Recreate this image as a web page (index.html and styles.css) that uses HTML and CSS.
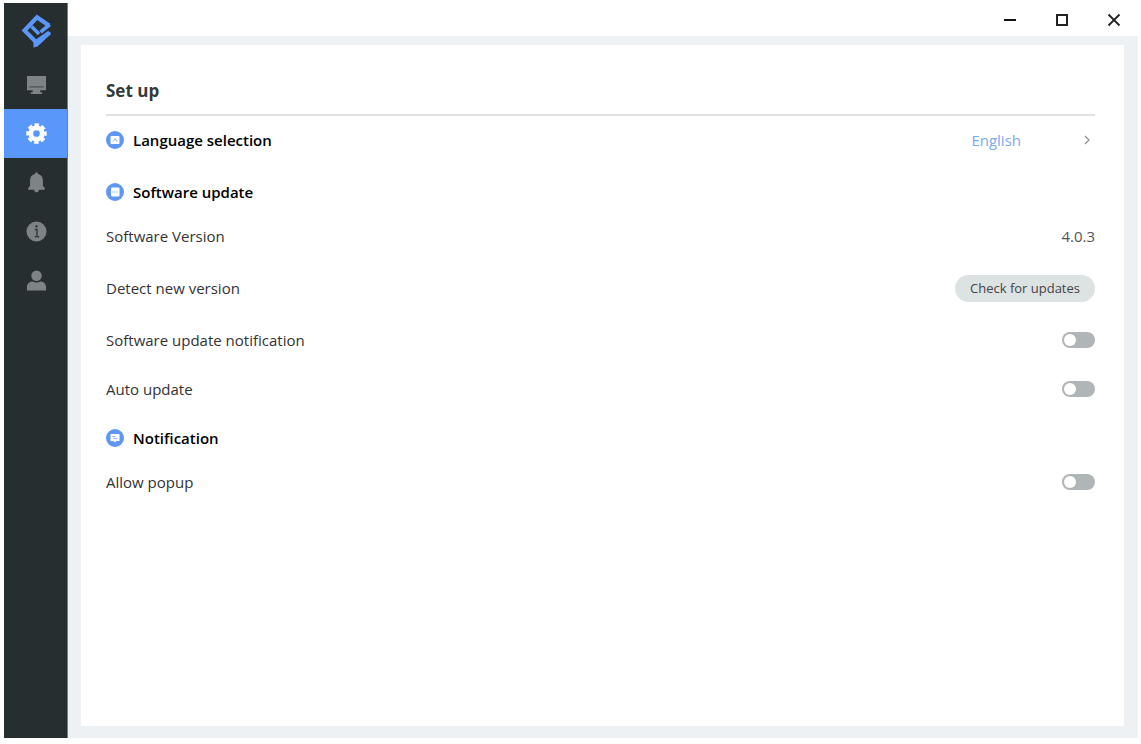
FILE: index.html
```html
<!DOCTYPE html>
<html lang="en">
<head>
<meta charset="UTF-8">
<meta name="viewport" content="width=device-width, initial-scale=1.0">
<title>Set up</title>
<link rel="stylesheet" href="styles.css">
</head>
<body>
<div class="window">
  <nav class="sidebar">
    <svg class="logo" viewBox="0 0 32 34" aria-hidden="true">
      <path d="M29 11.500L17 3.200L4.500 16.500L16 28L29.500 18.500" fill="none" stroke="#5a97f8" stroke-width="4.200" stroke-linejoin="miter"/>
      <path d="M13.500 25.500L13.500 33.500L17.500 32.500L30.500 20.500V17.500L16 27z" fill="#5a97f8"/>
      <path d="M11.500 12.500l7.500 7.500M29.800 10.500L20.500 18.200" fill="none" stroke="#5a97f8" stroke-width="3.600"/>
    </svg>
    <button class="nav" aria-label="Devices">
      <svg viewBox="0 0 22 22"><path d="M1 2h20v15h-6v2h2v2H5v-2h2v-2H1z" fill="#7e8485"/><path d="M3.500 13.500h15" stroke="#4a5152" stroke-width="1.300"/></svg>
    </button>
    <button class="nav active" aria-label="Settings">
      <svg viewBox="0 0 22 22"><g fill="none" stroke="#fff"><circle cx="11" cy="11" r="6" stroke-width="5"/><circle cx="11" cy="11" r="9" stroke-width="3.500" stroke-dasharray="4.600 2.470" stroke-dashoffset="2.300"/></g></svg>
    </button>
    <button class="nav" aria-label="Notifications">
      <svg viewBox="0 0 22 22"><path d="M11 0.500c1 0 1.700 0.700 1.700 1.700 3.500 0.900 5 3.400 5 6.800v5.500l2 2.500v1.500H2.300V17l2-2.500V9c0-3.400 1.500-5.900 5-6.800 0-1 0.700-1.700 1.700-1.700zM8.500 18.500h5c-0.300 1.800-1.200 2.700-2.500 2.700s-2.200-0.900-2.500-2.700z" fill="#7e8485"/></svg>
    </button>
    <button class="nav" aria-label="About">
      <svg viewBox="0 0 22 22"><circle cx="11" cy="11" r="10.500" fill="#7e8485"/><path d="M9.200 8.800h2.300v7.200M9.200 16.500h4.600" stroke="#353c3d" stroke-width="1.600" fill="none"/><circle cx="11" cy="5.600" r="1.300" fill="#353c3d"/></svg>
    </button>
    <button class="nav" aria-label="Account">
      <svg viewBox="0 0 22 22"><circle cx="11" cy="6" r="5.500" fill="#7e8485"/><path d="M1 21.500v-3.500c0-3.600 2.400-6 6-6 2.400 1.400 5.600 1.400 8 0 3.600 0 6 2.400 6 6v3.500z" fill="#7e8485"/></svg>
    </button>
  </nav>
  <div class="main">
    <header class="titlebar">
      <button aria-label="Minimize"><svg viewBox="0 0 14 14"><path d="M1 7h12" stroke="#111" stroke-width="2"/></svg></button>
      <button aria-label="Maximize"><svg viewBox="0 0 14 14"><path d="M2 2h10v10H2z" fill="none" stroke="#222" stroke-width="2"/></svg></button>
      <button aria-label="Close"><svg viewBox="0 0 14 14"><path d="M1.500 1.500l11 11M12.500 1.500l-11 11" stroke="#222" stroke-width="1.800"/></svg></button>
    </header>
    <main class="content">
      <section class="card">
        <h1>Set up</h1>
        <div class="row section">
          <h2>
            <svg viewBox="0 0 18 18"><circle cx="9" cy="9" r="9" fill="#5e97f3"/><rect x="4.500" y="5" width="9" height="8" rx="1" fill="#fff"/><path d="M7 10.500l2-3 2 3" fill="none" stroke="#8db5f7"/></svg>
            Language selection
          </h2>
          <button class="language">English
            <svg viewBox="0 0 8 10"><path d="M2 1l4 4-4 4" fill="none" stroke="#8a8f91" stroke-width="1.200"/></svg>
          </button>
        </div>
        <div class="row">
          <h2>
            <svg viewBox="0 0 18 18"><circle cx="9" cy="9" r="9" fill="#5e97f3"/><rect x="5" y="4.500" width="8.500" height="9" rx="1" fill="#fff"/><path d="M6.500 9h2M9.500 9h2.500" stroke="#8db5f7"/></svg>
            Software update
          </h2>
        </div>
        <div class="row first">
          <span>Software Version</span>
          <span class="version">4.0.3</span>
        </div>
        <div class="row">
          <span>Detect new version</span>
          <button class="check">Check for updates</button>
        </div>
        <div class="row">
          <label for="notify">Software update notification</label>
          <input type="checkbox" class="switch" id="notify">
        </div>
        <div class="row tight">
          <label for="auto">Auto update</label>
          <input type="checkbox" class="switch" id="auto">
        </div>
        <div class="row tight">
          <h2>
            <svg viewBox="0 0 18 18"><circle cx="9" cy="9" r="9" fill="#5e97f3"/><path d="M4.500 5h9v7h-3L9 13.500 7.500 12h-3z" fill="#fff"/><path d="M6.500 7.500h3M7.500 9.500h4" stroke="#8db5f7"/></svg>
            Notification
          </h2>
        </div>
        <div class="row first">
          <label for="popup">Allow popup</label>
          <input type="checkbox" class="switch" id="popup">
        </div>
      </section>
    </main>
  </div>
</div>
</body>
</html>
```
FILE: styles.css
```css
* { box-sizing: border-box; }
body { margin: 0; background: #fff; color: #333; font: 15px/20px "Open Sans", "Noto Sans", sans-serif; }
button { padding: 0; border: 0; background: none; font: inherit; cursor: pointer; }
svg { display: block; flex: none; }
.window { display: flex; min-height: 100vh; padding: 3px 3px 6px 4px; }
.sidebar { display: flex; flex-direction: column; width: 64px; background: #272e2f; border-right: 1px solid #777d80; }
.logo { width: 32px; height: 34px; margin: 11px 16px 12px; }
.nav { display: flex; align-items: center; justify-content: center; height: 49px; padding-left: 2px; }
.nav svg { width: 21px; height: 21px; }
.nav.active { background: #5997fb; }
.main { flex: 1; display: flex; flex-direction: column; }
.titlebar { display: flex; align-items: center; justify-content: flex-end; gap: 38px; height: 33px; padding-right: 17px; }
.titlebar svg { width: 14px; height: 14px; }
.content { flex: 1; display: flex; padding: 9px 14px 12px 13px; background: #edf1f3; }
.card { flex: 1; padding: 32px 29px 32px 25px; background: #fff; }
h1 { margin: 0 0 6px; padding-bottom: 9px; border-bottom: 2px solid #e1e2e3; color: #333b3b; font-size: 17px; line-height: 28px; font-weight: 700; }
h2 { display: flex; align-items: center; gap: 9px; margin: 0; color: #000; font-size: 15px; line-height: 20px; font-weight: 600; }
h2 svg { width: 18px; height: 18px; }
.row { display: flex; align-items: center; justify-content: space-between; height: 36px; margin-top: 16px; }
.row.section { margin-top: 0; }
.row.first { margin-top: 8px; }
.row.tight { margin-top: 13px; }
.language { display: flex; align-items: center; gap: 62px; padding-right: 4px; color: #7ba9f3; }
.language svg { width: 8px; height: 10px; }
.version { color: #555; }
.check { width: 140px; height: 27px; border-radius: 14px; background: #dde2e3; color: #444; font-size: 13px; }
.switch { appearance: none; display: flex; align-items: center; width: 33px; height: 16px; margin: 0; padding: 0 2px; border-radius: 8px; background: #b0b5b7; cursor: pointer; }
.switch::before { content: ""; width: 12px; height: 12px; border-radius: 50%; background: #fff; }
.switch:checked { justify-content: flex-end; background: #5997fb; }
```
